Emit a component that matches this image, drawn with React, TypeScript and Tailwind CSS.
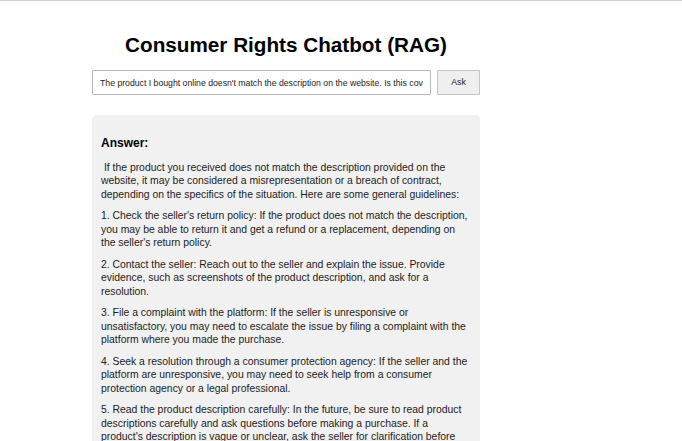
const paragraphs = [
  "\u00a0If the product you received does not match the description provided on the website, it may be considered a misrepresentation or a breach of contract, depending on the specifics of the situation. Here are some general guidelines:",
  "1. Check the seller's return policy: If the product does not match the description, you may be able to return it and get a refund or a replacement, depending on the seller's return policy.",
  "2. Contact the seller: Reach out to the seller and explain the issue. Provide evidence, such as screenshots of the product description, and ask for a resolution.",
  "3. File a complaint with the platform: If the seller is unresponsive or unsatisfactory, you may need to escalate the issue by filing a complaint with the platform where you made the purchase.",
  "4. Seek a resolution through a consumer protection agency: If the seller and the platform are unresponsive, you may need to seek help from a consumer protection agency or a legal professional.",
  "5. Read the product description carefully: In the future, be sure to read product descriptions carefully and ask questions before making a purchase. If a product's description is vague or unclear, ask the seller for clarification before making a purchase.",
];

export default function App() {
  return (
    <div className="min-h-screen border-t border-[#d2caca] bg-white font-['Liberation_Sans',Arial,sans-serif] text-[#1c1c1c]">
      <main className="ml-[92px] w-[388px] pt-[30px]">
        <h1 className="text-center text-[20.7px] font-bold leading-[28px] text-black">
          Consumer Rights Chatbot (RAG)
        </h1>

        <div className="mt-[11px] flex gap-[6px]">
          <input
            type="text"
            readOnly
            value="The product I bought online doesn't match the description on the website. Is this covered by consumer law?"
            className="h-[25px] min-w-0 flex-1 rounded-[1px] border border-[#b8b8b8] bg-white px-[7px] text-[8.7px] text-[#222] outline-none"
          />
          <button
            type="button"
            className="h-[25px] w-[43px] rounded-[1px] border border-[#c4c4c4] bg-[#efefef] text-[8.7px] text-[#222]"
          >
            Ask
          </button>
        </div>

        <section className="mt-[20px] rounded-[5px] bg-[#f1f1f1] px-[9px] pb-[20px] pt-[21px]">
          <h3 className="text-[12px] font-bold leading-[14px] text-black">Answer:</h3>
          <div className="mt-[11px] flex flex-col gap-[8.6px] text-[10.4px] leading-[13.3px]">
            {paragraphs.map((text) => (
              <p key={text.slice(0, 12)}>{text}</p>
            ))}
          </div>
        </section>
      </main>
    </div>
  );
}
